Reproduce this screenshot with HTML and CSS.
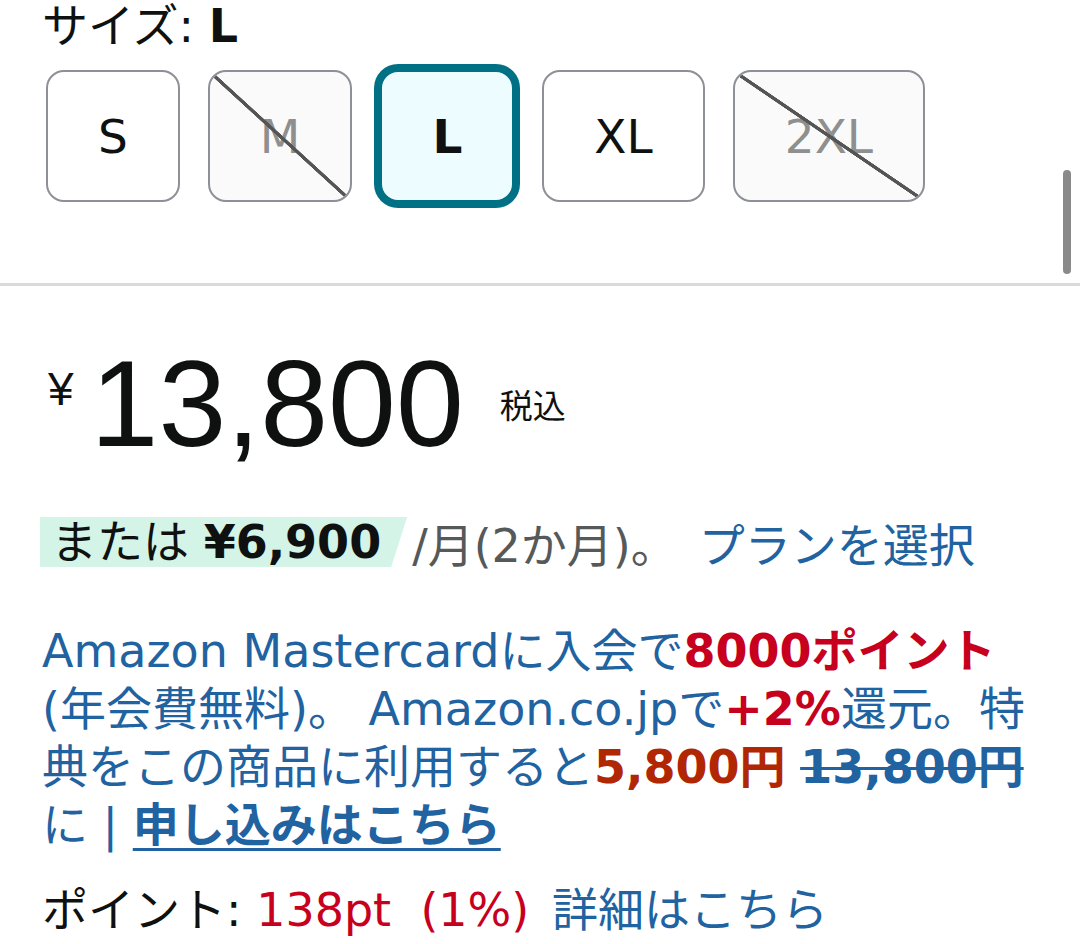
FILE: index.html
```html
<!DOCTYPE html>
<html lang="ja">
<head>
<meta charset="utf-8">
<title>サイズ選択</title>
<link rel="stylesheet" href="styles.css">
</head>
<body>
<div class="page">
  <div class="scrollbar"></div>
  <section class="variation">
    <div class="variation-label">サイズ: <b>L</b></div>
    <div class="swatches">
      <div class="swatch">S</div>
      <div class="swatch unavailable">M</div>
      <div class="swatch selected">L</div>
      <div class="swatch">XL</div>
      <div class="swatch unavailable">2XL</div>
    </div>
  </section>
  <section class="buybox">
    <div class="price">
      <span class="price-symbol">¥</span>
      <span class="price-whole">13,800</span>
      <span class="price-tax">税込</span>
    </div>
    <div class="installment">
      <span class="installment-badge">または <b>¥6,900</b></span>
      <span class="installment-term">/月(2か月)。</span>
      <a class="link">プランを選択</a>
    </div>
    <p class="card-offer">Amazon Mastercardに入会で<b class="deal">8000ポイント</b><br>(年会費無料)。 Amazon.co.jpで<b class="deal">+2%</b>還元。特<br>典をこの商品に利用すると<b class="offer-price">5,800円</b> <b class="strike">13,800円</b><br>に | <a class="apply">申し込みはこちら</a></p>
    <div class="points">ポイント: <span class="points-value">138pt&nbsp;&nbsp;(1%)</span> <a class="link">詳細はこちら</a></div>
  </section>
</div>
</body>
</html>
```

FILE: styles.css
```css
html, body {
  margin: 0;
  padding: 0;
  background: #ffffff;
}

body {
  font-family: "DejaVu Sans", "Noto Sans CJK JP", sans-serif;
  font-size: 46px;
  color: #0f1111;
}

.page {
  position: relative;
  width: 1080px;
  height: 944px;
  overflow: hidden;
}

.scrollbar {
  position: absolute;
  left: 1063px;
  top: 170px;
  width: 8px;
  height: 104px;
  border-radius: 4px;
  background: #8a8a8a;
}

/* ---------- variation ---------- */
.variation {
  padding: 0 42px;
  border-bottom: 3px solid #d9dbdb;
}

.variation-label {
  line-height: 52px;
}

.variation-label b {
  font-weight: bold;
}

.swatches {
  display: flex;
  gap: 28px;
  margin-top: 18px;
  margin-left: 4px;
  margin-bottom: 81px;
}

.swatch {
  position: relative;
  box-sizing: border-box;
  height: 132px;
  padding: 0 50px;
  display: flex;
  align-items: center;
  justify-content: center;
  border: 2px solid #8d9096;
  border-radius: 18px;
  background: #ffffff;
  color: #0f1111;
  font-size: 47px;
  line-height: 1;
}

.swatch.unavailable {
  background: #fafafa;
  color: #8f8f8f;
}

.swatch.unavailable::after {
  content: "";
  position: absolute;
  inset: 0;
  border-radius: 16px;
  background: linear-gradient(to top right,
    transparent calc(50% - 2px),
    #555555 calc(50% - 1.5px),
    #555555 calc(50% + 1.5px),
    transparent calc(50% + 2px));
}

.swatch.selected {
  border-color: #007185;
  background: #edfcff;
  font-weight: bold;
  box-shadow: 0 0 0 6px #007185;
}

/* ---------- buy box ---------- */
.buybox {
  padding: 58px 42px 0;
}

.price {
  display: flex;
  align-items: flex-start;
  font-family: "Liberation Sans", "Noto Sans CJK JP", sans-serif;
}

.price-symbol {
  font-size: 46px;
  line-height: 46px;
  margin: 22px 0 0 6px;
}

.price-whole {
  font-size: 122px;
  line-height: 121px;
  margin-left: 17px;
}

.price-tax {
  font-family: "DejaVu Sans", "Noto Sans CJK JP", sans-serif;
  font-size: 33px;
  line-height: 33px;
  margin: 46px 0 0 36px;
}

.installment {
  display: flex;
  align-items: center;
  margin-top: 48px;
  margin-left: -2px;
  height: 58px;
  white-space: nowrap;
}

.installment-badge {
  height: 50px;
  line-height: 50px;
  padding: 0 26px 0 11px;
  background: #d3f4e7;
  clip-path: polygon(0 0, 100% 0, calc(100% - 16px) 100%, 0 100%);
}

.installment-badge b {
  font-weight: bold;
}

.installment-term {
  color: #565959;
  margin-left: 5px;
}

.link {
  color: #2162a1;
  text-decoration: none;
  margin-left: 22px;
}

.card-offer {
  margin: 51px 0 0;
  line-height: 58px;
  color: #2162a1;
  width: 1010px;
}

.deal {
  color: #c7001e;
  font-weight: bold;
}

.offer-price {
  color: #b12704;
  font-weight: bold;
}

.strike {
  font-weight: bold;
  text-decoration: line-through;
  text-decoration-thickness: 3px;
}

.apply {
  color: #2162a1;
  font-weight: bold;
  text-decoration: underline;
  text-decoration-thickness: 3px;
  text-underline-offset: 7px;
}

.points {
  margin-top: 27px;
  line-height: 58px;
  white-space: nowrap;
}

.points-value {
  color: #c7001e;
}

.points .link {
  margin-left: 8px;
}
```
